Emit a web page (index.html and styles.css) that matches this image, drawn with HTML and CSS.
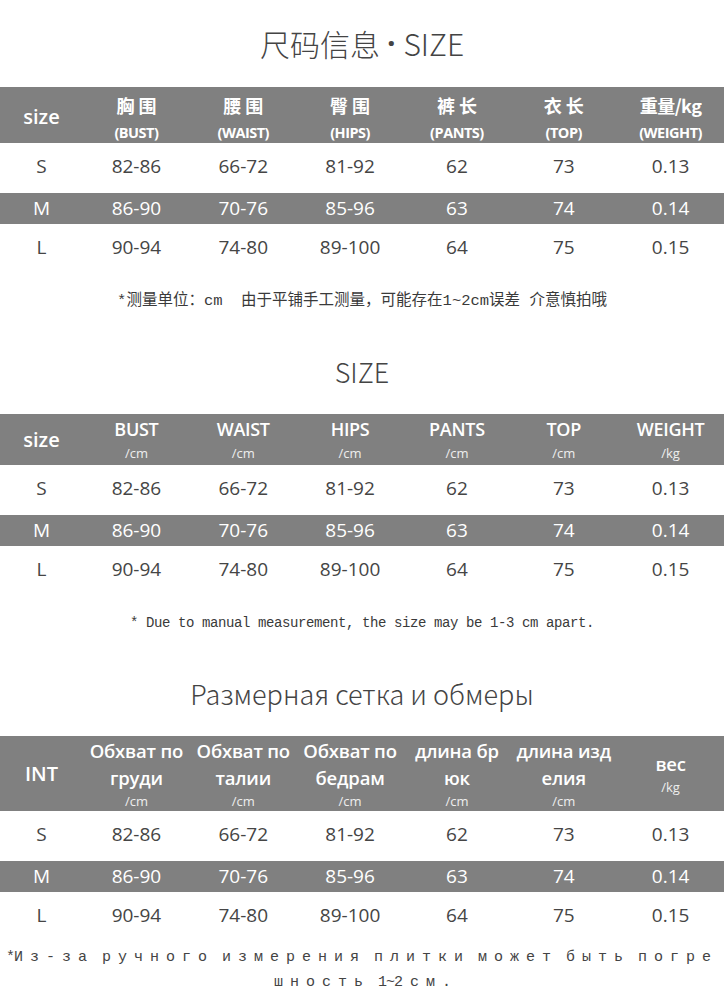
FILE: index.html
```html
<!DOCTYPE html>
<html lang="zh">
<head>
<meta charset="utf-8">
<title>尺码信息 · SIZE</title>
<link rel="stylesheet" href="styles.css">
</head>
<body>
<main class="page">

  <h1 class="title title-cn">尺码信息<span class="dot">·</span>SIZE</h1>
  <div class="chart">
    <div class="row head head-cn">
      <div class="cell label">size</div>
      <div class="cell stack"><span class="cn">胸围</span><span class="en">(BUST)</span></div>
      <div class="cell stack"><span class="cn">腰围</span><span class="en">(WAIST)</span></div>
      <div class="cell stack"><span class="cn">臀围</span><span class="en">(HIPS)</span></div>
      <div class="cell stack"><span class="cn">裤长</span><span class="en">(PANTS)</span></div>
      <div class="cell stack"><span class="cn">衣长</span><span class="en">(TOP)</span></div>
      <div class="cell stack"><span class="cn tight">重量/kg</span><span class="en">(WEIGHT)</span></div>
    </div>
    <div class="row body r-s"><div class="cell sz">S</div><div class="cell">82-86</div><div class="cell">66-72</div><div class="cell">81-92</div><div class="cell">62</div><div class="cell">73</div><div class="cell">0.13</div></div>
    <div class="row body r-m"><div class="cell sz">M</div><div class="cell">86-90</div><div class="cell">70-76</div><div class="cell">85-96</div><div class="cell">63</div><div class="cell">74</div><div class="cell">0.14</div></div>
    <div class="row body r-l"><div class="cell sz">L</div><div class="cell">90-94</div><div class="cell">74-80</div><div class="cell">89-100</div><div class="cell">64</div><div class="cell">75</div><div class="cell">0.15</div></div>
  </div>
  <p class="note note-cn">*测量单位：cm&nbsp; 由于平铺手工测量，可能存在1~2cm误差 介意慎拍哦</p>

  <h2 class="title title-en">SIZE</h2>
  <div class="chart">
    <div class="row head head-en">
      <div class="cell label">size</div>
      <div class="cell stack"><span class="main">BUST</span><span class="unit">/cm</span></div>
      <div class="cell stack"><span class="main">WAIST</span><span class="unit">/cm</span></div>
      <div class="cell stack"><span class="main">HIPS</span><span class="unit">/cm</span></div>
      <div class="cell stack"><span class="main">PANTS</span><span class="unit">/cm</span></div>
      <div class="cell stack"><span class="main">TOP</span><span class="unit">/cm</span></div>
      <div class="cell stack"><span class="main">WEIGHT</span><span class="unit">/kg</span></div>
    </div>
    <div class="row body r-s"><div class="cell sz">S</div><div class="cell">82-86</div><div class="cell">66-72</div><div class="cell">81-92</div><div class="cell">62</div><div class="cell">73</div><div class="cell">0.13</div></div>
    <div class="row body r-m"><div class="cell sz">M</div><div class="cell">86-90</div><div class="cell">70-76</div><div class="cell">85-96</div><div class="cell">63</div><div class="cell">74</div><div class="cell">0.14</div></div>
    <div class="row body r-l"><div class="cell sz">L</div><div class="cell">90-94</div><div class="cell">74-80</div><div class="cell">89-100</div><div class="cell">64</div><div class="cell">75</div><div class="cell">0.15</div></div>
  </div>
  <p class="note note-en">* Due to manual measurement, the size may be 1-3 cm apart.</p>

  <h2 class="title title-ru">Размерная сетка и обмеры</h2>
  <div class="chart">
    <div class="row head head-ru">
      <div class="cell label">INT</div>
      <div class="cell stack"><span class="main">Обхват по</span><span class="main">груди</span><span class="unit">/cm</span></div>
      <div class="cell stack"><span class="main">Обхват по</span><span class="main">талии</span><span class="unit">/cm</span></div>
      <div class="cell stack"><span class="main">Обхват по</span><span class="main">бедрам</span><span class="unit">/cm</span></div>
      <div class="cell stack"><span class="main">длина бр</span><span class="main">юк</span><span class="unit">/cm</span></div>
      <div class="cell stack"><span class="main">длина изд</span><span class="main">елия</span><span class="unit">/cm</span></div>
      <div class="cell stack"><span class="main">вес</span><span class="unit">/kg</span></div>
    </div>
    <div class="row body r-s"><div class="cell sz">S</div><div class="cell">82-86</div><div class="cell">66-72</div><div class="cell">81-92</div><div class="cell">62</div><div class="cell">73</div><div class="cell">0.13</div></div>
    <div class="row body r-m"><div class="cell sz">M</div><div class="cell">86-90</div><div class="cell">70-76</div><div class="cell">85-96</div><div class="cell">63</div><div class="cell">74</div><div class="cell">0.14</div></div>
    <div class="row body r-l"><div class="cell sz">L</div><div class="cell">90-94</div><div class="cell">74-80</div><div class="cell">89-100</div><div class="cell">64</div><div class="cell">75</div><div class="cell">0.15</div></div>
  </div>
  <p class="note note-ru"><span class="hw">*</span>Из-за ручного измерения плитки может быть погре<br>шность <span class="hw">1~2</span> см<span class="hw">.</span></p>

</main>
</body>
</html>
```

FILE: styles.css
```css
* { box-sizing: border-box; }

html, body {
  margin: 0;
  padding: 0;
  background: #ffffff;
}

.page {
  width: 724px;
  margin: 0;
  font-family: "Open Sans", "Noto Sans CJK SC", sans-serif;
  color: #444444;
}

/* ---------- titles ---------- */
.title {
  margin: 0;
  display: flex;
  align-items: center;
  justify-content: center;
  font-family: "Noto Sans CJK SC", "Open Sans", sans-serif;
  font-weight: 300;
  color: #444444;
  white-space: nowrap;
}

.title-cn {
  height: 87px;
  padding-bottom: 2px;
  font-size: 30px;
}

.title-cn .dot {
  font-family: "Open Sans", sans-serif;
  font-weight: 700;
  margin: 0 8px 0 7px;
}

.title-en {
  height: 82px;
  padding-bottom: 4px;
  font-size: 27px;
}

.title-ru {
  height: 82px;
  padding-bottom: 4px;
  font-size: 27px;
}

/* ---------- charts ---------- */
.chart {
  display: flex;
  flex-direction: column;
}

.row {
  display: grid;
  grid-template-columns: 83px repeat(6, 1fr);
}

.cell {
  display: flex;
  align-items: center;
  justify-content: center;
  white-space: nowrap;
}

.head {
  background: #808080;
  color: #ffffff;
}

.head .label {
  font-size: 20px;
  font-weight: 600;
}

.stack {
  flex-direction: column;
}

/* Chinese header */
.head-cn { height: 56px; }
.head-cn .stack { padding-top: 5px; }
.head-cn .cn {
  font-family: "Noto Sans CJK SC", sans-serif;
  font-weight: 700;
  font-size: 18px;
  line-height: 27px;
  letter-spacing: 4px;
  margin-right: -4px;
}
.head-cn .cn.tight {
  letter-spacing: -0.5px;
  margin-right: 0;
}
.head-cn .en {
  font-weight: 700;
  font-size: 14.5px;
  line-height: 27px;
  letter-spacing: -0.5px;
}

/* English header */
.head-en { height: 51px; }
.head-en .main {
  font-weight: 600;
  font-size: 18px;
  line-height: 26px;
  letter-spacing: -0.3px;
}
.head-en .unit {
  font-weight: 400;
  font-size: 13px;
  line-height: 22px;
  color: #eeeeee;
}

/* Russian header */
.head-ru { height: 75px; }
.head-ru .main {
  font-weight: 600;
  font-size: 18.5px;
  line-height: 27px;
  letter-spacing: -0.2px;
}
.head-ru .unit {
  font-weight: 400;
  font-size: 13px;
  line-height: 20px;
  color: #eeeeee;
}

/* body rows */
.body {
  font-size: 19px;
  font-weight: 400;
  color: #454545;
}

.body .sz {
  font-weight: 500;
}

.r-s { height: 50px; padding-bottom: 4px; }
.r-m { height: 31px; padding-bottom: 2px; background: #808080; color: #ffffff; }
.r-l { height: 46px; }

/* ---------- notes ---------- */
.note {
  margin: 0;
  text-align: center;
  color: #3a3a3a;
  white-space: nowrap;
}

.note-cn {
  height: 62px;
  line-height: 62px;
  font-family: "Liberation Mono", "Noto Sans CJK SC", monospace;
  font-size: 15.5px;
  font-weight: 400;
}

.note-en {
  height: 62px;
  line-height: 62px;
  font-family: "Liberation Mono", monospace;
  font-size: 14px;
  letter-spacing: -0.4px;
}

.note-ru {
  padding-top: 7px;
  line-height: 25px;
  font-family: "Liberation Mono", monospace;
  font-size: 15px;
  letter-spacing: 7px;
  word-spacing: -8px;
  color: #444444;
  padding-bottom: 20px;
}

.note-ru .hw {
  letter-spacing: -1px;
}
```
